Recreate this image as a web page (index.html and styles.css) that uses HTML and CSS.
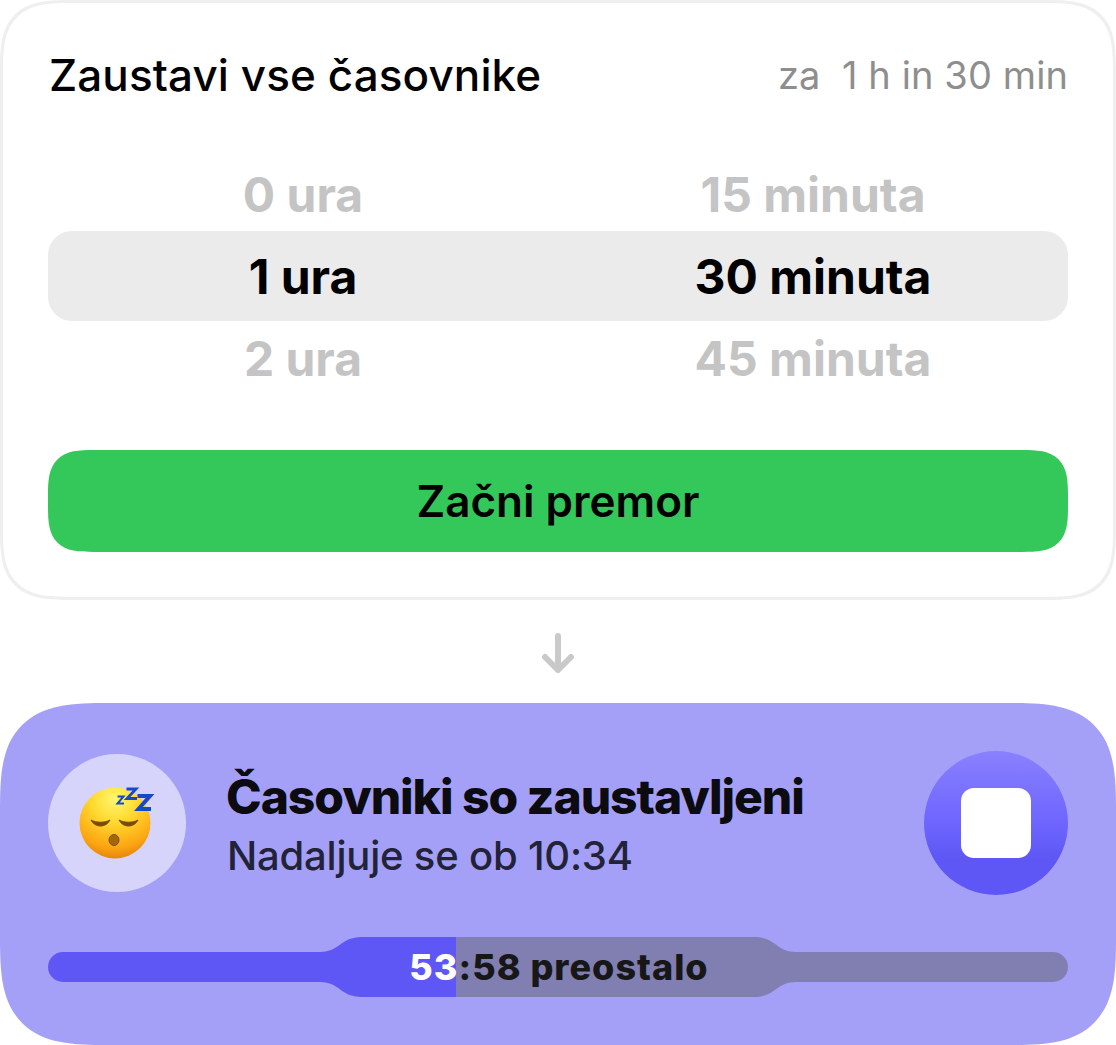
FILE: index.html
```html
<!DOCTYPE html>
<html lang="sl">
<head>
    <meta charset="UTF-8">
    <meta name="viewport" content="width=device-width, initial-scale=1.0">
    <title>Zaustavi vse časovnike</title>
    <link rel="stylesheet" href="styles.css">
</head>
<body>
    <div class="card">
        <div class="card-header">
            <h1>Zaustavi vse časovnike</h1>
            <span class="summary">za&nbsp; 1 h in 30 min</span>
        </div>
        <div class="picker">
            <div class="picker-row">
                <span>0 ura</span>
                <span>15 minuta</span>
            </div>
            <div class="picker-row selected">
                <span>1 ura</span>
                <span>30 minuta</span>
            </div>
            <div class="picker-row">
                <span>2 ura</span>
                <span>45 minuta</span>
            </div>
        </div>
        <button class="start-button" type="button">Začni premor</button>
    </div>

    <div class="arrow">
        <svg width="40" height="44" viewBox="0 0 40 44" fill="none" stroke="#c9c9c9" stroke-width="6" stroke-linecap="round" stroke-linejoin="round">
            <path d="M20 6V40M7 27L20 40L33 27"/>
        </svg>
    </div>

    <div class="paused">
        <div class="paused-top">
            <div class="emoji-circle">
                <svg width="76" height="76" viewBox="0 0 76 76">
                    <defs>
                        <radialGradient id="face" cx="0.5" cy="0.16" r="0.88">
                            <stop offset="0" stop-color="#fff76e"/>
                            <stop offset="0.38" stop-color="#ffd92e"/>
                            <stop offset="0.78" stop-color="#fca512"/>
                            <stop offset="1" stop-color="#e07e0a"/>
                        </radialGradient>
                    </defs>
                    <circle cx="36" cy="38" r="35.5" fill="url(#face)"/>
                    <path d="M12 35C16 43 27 43 31 35C26 38 17 38 12 35Z" fill="#7a4a08" stroke="#7a4a08" stroke-width="1" stroke-linejoin="round"/>
                    <path d="M40 35C44 43 55 43 59 35C54 38 45 38 40 35Z" fill="#7a4a08" stroke="#7a4a08" stroke-width="1" stroke-linejoin="round"/>
                    <ellipse cx="35" cy="55" rx="5" ry="5.5" fill="#a3670a" stroke="#7f4d08" stroke-width="1"/>
                    <g fill="none" stroke="#1549c8" stroke-linejoin="miter">
                        <path d="M38.5 11.5H44.5L38.5 18.5H45" stroke-width="2"/>
                        <path d="M47.5 4H57L48 13.5H58" stroke-width="2.8"/>
                        <path d="M58.5 11H71L59.5 24H72" stroke-width="4"/>
                    </g>
                </svg>
            </div>
            <div class="paused-text">
                <h2>Časovniki so zaustavljeni</h2>
                <p>Nadaljuje se ob 10:34</p>
            </div>
            <button class="stop-button" type="button"><span class="stop-square"></span></button>
        </div>
        <div class="progress">
            <svg class="progress-shape" width="1020" height="60" viewBox="0 0 1020 60">
                <defs>
                    <linearGradient id="split" gradientUnits="userSpaceOnUse" x1="0" y1="0" x2="1020" y2="0">
                        <stop offset="0.4" stop-color="#5f57f5"/>
                        <stop offset="0.4" stop-color="#817eb2"/>
                    </linearGradient>
                </defs>
                <path fill="url(#split)" d="M15 15H272C292 15 292 0 314 0H706C728 0 728 15 748 15H1005A15 15 0 0 1 1005 45H748C728 45 728 60 706 60H314C292 60 292 45 272 45H15A15 15 0 0 1 15 15Z"/>
            </svg>
            <div class="progress-label"><span class="elapsed">53</span>:58 preostalo</div>
        </div>
    </div>
</body>
</html>
```

FILE: styles.css
```css
body {
    font-family: Inter, "Noto Sans", sans-serif;
    margin: 0;
    padding: 0;
    background-color: #fff;
    color: #000;
}
.card {
    height: 600px;
    box-sizing: border-box;
    padding: 0 45px;
    border: 3px solid #efefef;
    border-radius: 72px;
    corner-shape: superellipse(1.6);
    background: #fff;
}
.card-header {
    display: flex;
    justify-content: space-between;
    align-items: center;
    height: 144px;
}
h1 {
    margin: 0 0 0 1px;
    font-size: 44px;
    font-weight: 500;
    letter-spacing: 0.1px;
}
.summary {
    font-size: 38px;
    letter-spacing: 0.1px;
    color: #8e8e8e;
}
.picker {
    margin-top: 6px;
    font-size: 48px;
    font-weight: 700;
    color: #c4c4c4;
}
.picker-row {
    display: grid;
    grid-template-columns: 1fr 1fr;
    align-items: center;
    height: 82px;
    text-align: center;
}
.picker-row.selected {
    height: 90px;
    margin: -4px 0;
    border-radius: 24px;
    background: #ebebeb;
    color: #000;
}
.start-button {
    display: block;
    width: 100%;
    height: 102px;
    margin-top: 51px;
    padding: 0;
    border: none;
    border-radius: 46px;
    corner-shape: superellipse(1.6);
    background: #34c85a;
    color: #000;
    font-family: inherit;
    font-size: 44px;
    font-weight: 600;
}
.arrow {
    display: flex;
    justify-content: center;
    align-items: center;
    height: 103px;
}
.paused {
    height: 342px;
    box-sizing: border-box;
    padding: 48px;
    border-radius: 108px;
    corner-shape: superellipse(1.6);
    background: #a5a0f7;
}
.paused-top {
    display: flex;
    align-items: center;
    height: 144px;
}
.emoji-circle {
    display: flex;
    justify-content: center;
    align-items: center;
    flex: none;
    width: 138px;
    height: 138px;
    border-radius: 50%;
    background: #d6d4fb;
}
.paused-text {
    flex: 1;
    margin-left: 41px;
}
h2 {
    margin: 0 0 0 -1px;
    font-size: 48px;
    font-weight: 800;
    letter-spacing: -1.05px;
    line-height: 58px;
    color: #0b0b10;
}
.paused-text p {
    margin: 7px 0 0;
    font-size: 40px;
    font-weight: 500;
    letter-spacing: -0.2px;
    line-height: 46px;
    color: #222238;
}
.stop-button {
    display: flex;
    justify-content: center;
    align-items: center;
    flex: none;
    width: 144px;
    height: 144px;
    padding: 0;
    border: none;
    border-radius: 50%;
    background: linear-gradient(#8a80ff, #7068ff 45%, #5f57f5 75%);
}
.stop-square {
    width: 70px;
    height: 70px;
    border-radius: 13px;
    background: #fff;
}
.progress {
    position: relative;
    height: 60px;
    margin-top: 42px;
}
.progress-shape {
    display: block;
}
.progress-label {
    position: absolute;
    top: 0;
    left: 0;
    right: 0;
    padding-left: 2px;
    font-size: 36px;
    font-weight: 800;
    letter-spacing: 1px;
    line-height: 60px;
    text-align: center;
    color: #171717;
}
.elapsed {
    color: #fff;
}
```
